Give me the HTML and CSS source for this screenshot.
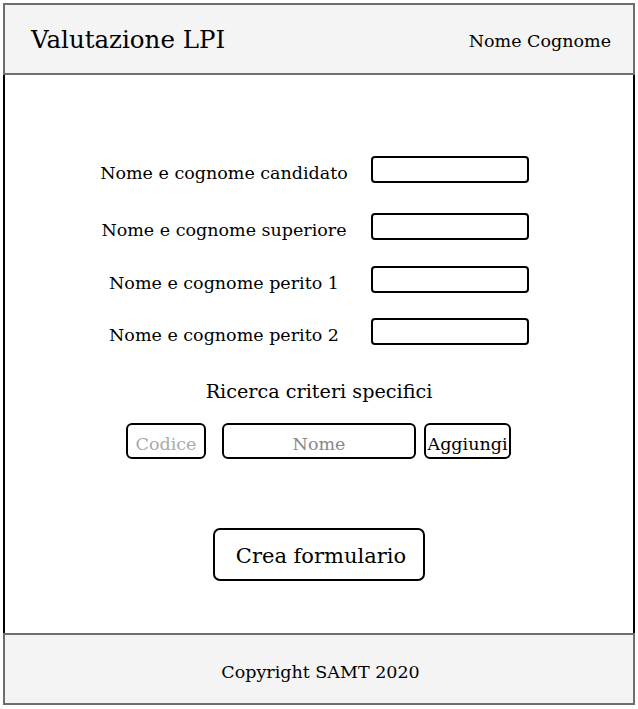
FILE: index.html
```html
<!DOCTYPE html>
<html lang="it">
<head>
  <meta charset="utf-8">
  <link rel="stylesheet" href="styles.css">
</head>
<body>
  <div class="page">
    <header class="top">
      <h1>Valutazione LPI</h1>
      <span class="user">Nome Cognome</span>
    </header>
    <main class="content">
      <div class="fields">
        <label class="row r1"><span>Nome e cognome candidato</span><input type="text"></label>
        <label class="row r2"><span>Nome e cognome superiore</span><input type="text"></label>
        <label class="row r3"><span>Nome e cognome perito 1</span><input type="text"></label>
        <label class="row r4"><span>Nome e cognome perito 2</span><input type="text"></label>
      </div>
      <h2>Ricerca criteri specifici</h2>
      <div class="search">
        <input type="text" class="code" placeholder="Codice">
        <input type="text" class="name" placeholder="Nome">
        <button class="add">Aggiungi</button>
      </div>
      <button class="create">Crea formulario</button>
    </main>
    <footer class="bottom">Copyright SAMT 2020</footer>
  </div>
</body>
</html>
```

FILE: styles.css
```css
body {
  margin: 0;
  font-family: "DejaVu Serif", serif;
  color: #000;
}

.page {
  padding: 3px 3px 3px 3px;
}

.top {
  display: flex;
  align-items: center;
  justify-content: space-between;
  height: 68px;
  padding: 0 22px 0 26px;
  background-color: #f4f4f4;
  border: 2px solid #6e6e6e;
}

.top h1 {
  margin: 0;
  font-size: 24.5px;
  font-weight: normal;
}

.top .user {
  font-size: 17.5px;
  margin-top: 4px;
}

.content {
  height: 558px;
  border-left: 2px solid #000;
  border-right: 2px solid #000;
  display: flex;
  flex-direction: column;
  align-items: center;
}

.fields {
  margin-top: 81px;
  display: flex;
  flex-direction: column;
  align-self: flex-start;
  margin-left: 75px;
}

.row {
  display: flex;
  align-items: center;
}

.row span {
  width: 288px;
  text-align: center;
  font-size: 17.5px;
  padding-top: 6px;
}

.row input {
  width: 158px;
  height: 27px;
  box-sizing: border-box;
  border: 2px solid #000;
  border-radius: 4px;
  margin-left: 3px;
}

.r2 { margin-top: 30px; }
.r3 { margin-top: 26px; }
.r4 { margin-top: 25px; }

h2 {
  margin: 35px 0 0 0;
  font-size: 19.2px;
  font-weight: normal;
}

.search {
  display: flex;
  margin-top: 20px;
  margin-left: -1px;
}

.search input, .search button {
  height: 36px;
  box-sizing: border-box;
  border: 2px solid #000;
  border-radius: 6px;
  background: #fff;
  font-family: "DejaVu Serif", serif;
  font-size: 17.5px;
  text-align: center;
  padding: 5px 0 0 0;
  color: #000;
}

.search input::placeholder {
  color: #888;
}

.search .code {
  width: 80px;
}

.search .code::placeholder {
  color: #aaa;
}

.search .name {
  width: 194px;
  margin-left: 16px;
}

.search .add {
  width: 87px;
  margin-left: 8px;
}

.create {
  margin-top: 69px;
  width: 212px;
  height: 53px;
  border: 2px solid #000;
  border-radius: 7px;
  background: #fff;
  font-family: "DejaVu Serif", serif;
  font-size: 21px;
  padding: 3px 0 0 4px;
}

.bottom {
  display: flex;
  align-items: center;
  justify-content: center;
  background-color: #f4f4f4;
  border: 2px solid #6e6e6e;
  font-size: 17.5px;
  padding: 5px 0 0 3px;
  box-sizing: border-box;
  height: 72px;
}
```
